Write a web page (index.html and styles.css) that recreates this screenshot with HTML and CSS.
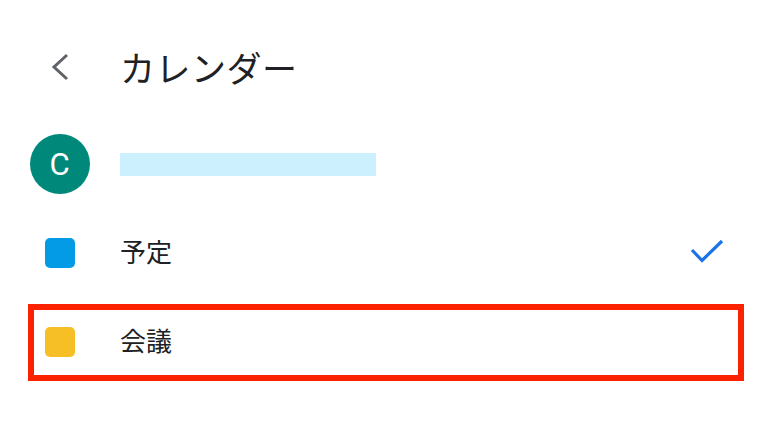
FILE: index.html
```html
<!DOCTYPE html>
<html>
<head>
<meta charset="utf-8"/>
<title>カレンダー</title>
<link rel="stylesheet" href="styles.css">
</head>
<body>

<div class="header">
	<div class="lead">
		<svg class="back" width="20" height="28" viewBox="0 0 20 28"><polyline points="17,2 4,14 17,26" fill="none" stroke="#5f6368" stroke-width="3"/></svg>
	</div>
	<h1>カレンダー</h1>
</div>

<div class="account">
	<div class="lead"><div class="avatar">C</div></div>
	<div class="email"></div>
</div>

<div class="row">
	<div class="lead"><div class="swatch blue"></div></div>
	<div class="label">予定</div>
	<svg class="check" width="36" height="28" viewBox="0 0 36 28"><polyline points="3,11 13,21.5 33,2" fill="none" stroke="#1a73e8" stroke-width="3.2"/></svg>
</div>

<div class="row highlight">
	<div class="lead"><div class="swatch yellow"></div></div>
	<div class="label">会議</div>
</div>

</body>
</html>
```

FILE: styles.css
```css
body {
	margin: 0px;
	background: #fff;
	font-family: "Noto Sans CJK JP", "Noto Sans", Roboto, sans-serif;
	color: #202124;
}
.lead {
	width: 120px;
	flex: none;
	display: flex;
	justify-content: center;
	align-items: center;
}
.header {
	display: flex;
	align-items: center;
	height: 72px;
	padding-top: 31px;
}
.header h1 {
	margin: 0 0 2px 0;
	font-size: 35px;
	font-weight: normal;
	line-height: 1;
	letter-spacing: 0.5px;
}
.back {
	display: block;
	margin-right: 1px;
}
.account {
	display: flex;
	align-items: center;
	height: 88px;
	margin-top: 17px;
}
.avatar {
	width: 60px;
	height: 60px;
	border-radius: 50%;
	background: #00897b;
	color: #fff;
	font-family: Roboto, sans-serif;
	font-size: 31px;
	display: flex;
	align-items: center;
	justify-content: center;
	margin-right: 1px;
}
.email {
	width: 256px;
	height: 23px;
	background: #cdf0fe;
	margin-top: 1px;
}
.row {
	display: flex;
	align-items: center;
	height: 89px;
	position: relative;
}
.swatch {
	width: 30px;
	height: 30px;
	border-radius: 5px;
	margin-right: 1px;
}
.blue { background: #039be5; }
.yellow { background: #f6bf26; }
.label {
	flex: 1;
	font-size: 26px;
	margin-bottom: 4px;
}
.check {
	display: block;
	margin-right: 43px;
}
/* red highlight frame around the row */
.highlight::after {
	content: "";
	position: absolute;
	top: 7px;
	left: 28px;
	right: 24px;
	bottom: 5px;
	border: 6px solid #fc2200;
}
```
